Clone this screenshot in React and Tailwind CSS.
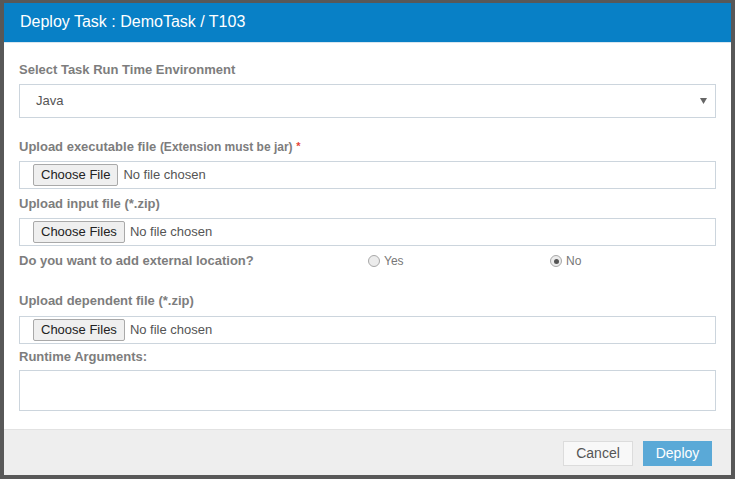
import React, { useState } from 'react';

const Label = ({ children, className = '' }) => (
  <div className={`h-[18px] leading-[18px] text-[13px] font-bold text-[#7d7d7d] ${className}`}>{children}</div>
);

const FileBox = ({ text, className = '' }) => (
  <div className={`h-[28px] border border-[#ccd5dd] flex items-center pl-[13px] ${className}`}>
    <span className="h-[22px] px-[7px] flex items-center border border-[#a9a9a9] rounded-[2px] bg-[#efefef] text-[13px] text-[#222]">
      {text}
    </span>
    <span className="ml-[5px] text-[13px] text-[#555]">No file chosen</span>
  </div>
);

const Radio = ({ checked, label, onClick }) => (
  <div className="flex items-center cursor-pointer" onClick={onClick}>
    <span className="w-[12px] h-[12px] rounded-full border border-[#a8a8a8] bg-[#ececec] flex items-center justify-center">
      {checked && <span className="w-[5px] h-[5px] rounded-full bg-[#555]" />}
    </span>
    <span className="ml-[4px] text-[12px] text-[#777]">{label}</span>
  </div>
);

const App = () => {
  const [external, setExternal] = useState(false);

  return (
    <div className="w-[735px] h-[479px] bg-[#585858] pt-[3px] px-[4px] pb-[4px] font-['Liberation_Sans',Arial,sans-serif]">
      <div className="bg-white h-full flex flex-col">
        {/* Header */}
        <div className="h-[40px] bg-[#0880c6] border-b border-[#d8e6ef] flex items-center pl-[16px] pb-[1px]">
          <h4 className="text-white text-[16px]">Deploy Task : DemoTask / T103</h4>
        </div>

        {/* Body */}
        <div className="flex-1 px-[15px] pt-[18px]">
          <Label className="mb-[5px]">Select Task Run Time Environment</Label>
          <div className="h-[34px] border border-[#ccd5dd] flex items-center justify-between pl-[16px] pr-[8px]">
            <span className="text-[13px] text-[#555]">Java</span>
            <svg width="7" height="6" viewBox="0 0 7 6">
              <path d="M0 0h7L3.5 6z" fill="#666" />
            </svg>
          </div>

          <Label className="mt-[20px] mb-[5px]">
            Upload executable file <span className="text-[12px]">(Extension must be jar)</span>{' '}
            <span className="text-[#e5453a] text-[11px] relative top-[-1px]">*</span>
          </Label>
          <FileBox text="Choose File" />

          <Label className="mt-[6px] mb-[5px]">Upload input file (*.zip)</Label>
          <FileBox text="Choose Files" />

          <div className="mt-[6px] flex items-center h-[18px]">
            <Label className="w-[349px]">Do you want to add external location?</Label>
            <div className="w-[182px]">
              <Radio label="Yes" checked={external} onClick={() => setExternal(true)} />
            </div>
            <Radio label="No" checked={!external} onClick={() => setExternal(false)} />
          </div>

          <Label className="mt-[22px] mb-[6px]">Upload dependent file (*.zip)</Label>
          <FileBox text="Choose Files" />

          <Label className="mt-[4px] mb-[4px]">Runtime Arguments:</Label>
          <textarea className="block w-full h-[41px] border border-[#ccd5dd] resize-none outline-none text-[13px] p-[6px]" />
        </div>

        {/* Footer */}
        <div className="h-[46px] bg-[#eeeeee] border-t border-[#e2e2e2] flex items-center justify-end pr-[19px] pt-[1px] gap-[10px]">
          <button className="w-[70px] h-[25px] bg-[#f8f8f8] border border-[#dcdcdc] text-[14px] text-[#555]">Cancel</button>
          <button className="w-[69px] h-[25px] bg-[#5aa9d7] border border-[#5aa9d7] text-[14px] text-white">Deploy</button>
        </div>
      </div>
    </div>
  );
};

export default App;
